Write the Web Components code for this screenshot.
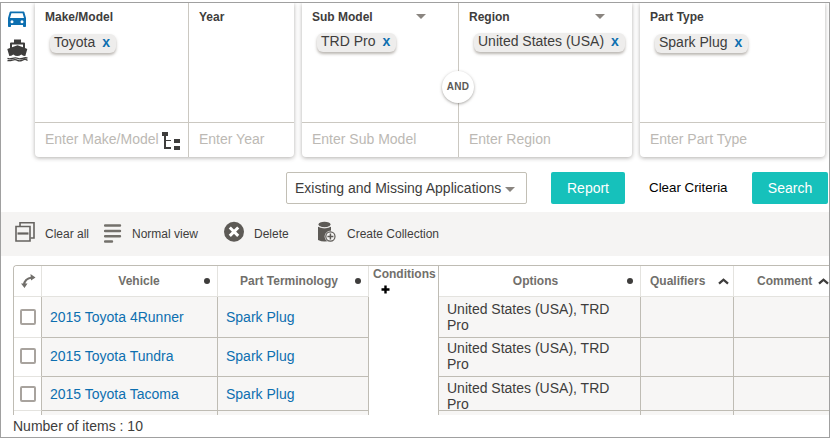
<!DOCTYPE html>
<html lang="en"><head><meta charset="utf-8"><title>Applications</title>
<style>body{margin:0;background:#fff;font-family:"Liberation Sans",Arial,sans-serif;color:#3e3d3c;overflow:hidden}</style></head><body>
<app-frame></app-frame>
<script>
const define=(name,html)=>{
  const t=document.createElement('template');
  t.innerHTML=html;
  customElements.define(name,class extends HTMLElement{
    constructor(){super();this.attachShadow({mode:'open'}).append(t.content.cloneNode(true));}
  });
};
define('filter-tag',`<style>
:host{display:flex;width:max-content;box-sizing:border-box;height:19px;margin:var(--tag-top,10px) 0 0 5px;padding:0 6px 0 4px;border-radius:6px;background:#eeedec;box-shadow:0 2px 3px rgba(90,80,70,.42);font-size:14px;line-height:17px;gap:7px;white-space:nowrap}
b{color:#0d6fb0}</style><slot></slot><b>x</b>`);
define('filter-field',`<style>
:host{display:flex;flex-direction:column;box-sizing:border-box;height:154px;border-right:var(--edge,0) solid #cbc8c1}
header{display:flex;justify-content:space-between;height:15px;padding:6px 32px 0 10px;font-weight:700;font-size:12px;line-height:16px}
.in{height:34px;margin-top:auto;border-top:1px solid #cbc8c1;padding-left:10px;font-size:14px;line-height:32px;color:#bcb9b4;white-space:nowrap}
.tags{padding-left:10px}
</style><header><slot name="title"></slot><slot name="arrow"></slot></header><div class="tags"><slot></slot></div><div class="in"><slot name="hint"></slot></div>`);
define('drop-arrow',`<style>:host{display:block;width:0;height:0;border:5px solid transparent;border-top-color:#8a8580;border-bottom:0}</style>`);
define('filter-card',`<style>:host{display:grid;box-sizing:border-box;height:154px;background:#fff;border-radius:0 0 4px 4px;box-shadow:0 1px 4px rgba(80,75,70,.45)}</style><slot></slot>`);
define('and-badge',`<style>:host{position:absolute;left:441px;top:68px;width:32px;height:32px;border-radius:50%;background:#fff;box-shadow:0 1px 3px rgba(80,75,70,.5);font:700 10px/32px "Liberation Sans",sans-serif;letter-spacing:.3px;text-align:center;color:#5b5956}</style><slot></slot>`);
define('vehicle-nav',`<style>:host{display:flex;flex-direction:column;align-items:flex-start;padding:7px 0 0 6px;gap:11px;width:28px;box-sizing:border-box}svg{display:block}</style>
<svg width="20" height="18" viewBox="0 0 20 18"><path fill="#0d6fb0" fill-rule="evenodd" d="M3.4 1.500h13.2l.7.5L19 8v8.2q0 .8-.8.8h-1.400q-.8 0-.8-.8V15H4v1.200q0 .8-.8.8H1.800Q1 17 1 16.200V8l1.700-6zM4.400 3.300 3 8h14l-1.400-4.700zM5 10.200a1.500 1.500 0 1 0 0 3 1.500 1.500 0 0 0 0-3zm10 0a1.500 1.500 0 1 0 0 3 1.500 1.500 0 0 0 0-3z"/></svg>
<svg width="21" height="23" viewBox="0 0 21 23"><path fill="#3e3d3c" fill-rule="evenodd" d="M7 .500h7v3h3q1 0 1 1v4.500l2.300 1-2 7q-2 0-4-1.500-4 3-8 0-2 1.500-4 1.500l-2-7L3 9V4.500q0-1 1-1h3zM5 5.500v2.800L10.500 6.300 16 8.300V5.500z"/><path d="M.5 19.300q1.800 1 5 0t5 0 5 0 5-.2M.5 21.500q2 .5 5-.4t5 .3 5-.3 5 .4" fill="none" stroke="#3e3d3c" stroke-width="1.300"/></svg>`);
define('tree-icon',`<style>:host{position:absolute;left:161px;top:129px}svg{display:block}</style><svg width="19" height="20" viewBox="0 0 19 20" shape-rendering="crispEdges"><path fill="#fff" d="M-1 0h20v20H-1z"/><path fill="#3e3d3c" d="M0 0h6v4H0zM12 7h6v4h-6zM12 14h6v4h-6zM2 4h2v4h-2zM2 8h7v1H4v6h5v2H2z"/></svg>`);
define('filter-bar',`<style>
:host{display:flex;height:154px;position:relative}
vehicle-nav{margin-right:6px}
.a{width:259px;grid-template-columns:154px 105px;margin-right:8px}
.b{width:330px;grid-template-columns:157px 173px;margin-right:8px}
.c{width:185px;grid-template-columns:185px}
.e{--edge:1px}.b{--tag-top:9px}
drop-arrow{margin-top:5px}
</style>
<vehicle-nav></vehicle-nav>
<filter-card class="a"><filter-field class="e"><span slot="title">Make/Model</span><filter-tag>Toyota</filter-tag><span slot="hint">Enter Make/Model</span></filter-field>
<filter-field><span slot="title">Year</span><span slot="hint">Enter Year</span></filter-field></filter-card>
<filter-card class="b"><filter-field class="e"><span slot="title">Sub Model</span><drop-arrow slot="arrow"></drop-arrow><filter-tag>TRD Pro</filter-tag><span slot="hint">Enter Sub Model</span></filter-field>
<filter-field><span slot="title">Region</span><drop-arrow slot="arrow" style="margin-right:-5px"></drop-arrow><filter-tag style="margin-left:5px">United States (USA)</filter-tag><span slot="hint">Enter Region</span></filter-field></filter-card>
<filter-card class="c"><filter-field><span slot="title">Part Type</span><filter-tag>Spark Plug</filter-tag><span slot="hint">Enter Part Type</span></filter-field></filter-card>
<tree-icon></tree-icon><and-badge>AND</and-badge>`);
define('action-row',`<style>
:host{display:flex;justify-content:flex-end;height:32px;margin:15px 0 8px;font-size:14px;line-height:32px;padding-right:1px;white-space:nowrap}
.sel{display:flex;box-sizing:border-box;width:241px;height:32px;border:1px solid #c2bfb5;border-radius:2px;padding-left:8px;line-height:30px;margin-right:24px}
drop-arrow{margin:14px 0 0 4px}
button{font:inherit;border:0;padding:0;color:#fff;background:#16c1bb;border-radius:2px;width:74px;height:32px}
.l{font-size:13.333px;color:#000;width:78px;margin:0 25px 0 24px}
.s{width:76px}
</style><div class="sel"><span>Existing and Missing Applications</span><drop-arrow></drop-arrow></div><button>Report</button><span class="l">Clear Criteria</span><button class="s">Search</button>`);
define('tool-item',`<style>:host{display:flex;align-items:flex-start;height:44px;font-size:12px;line-height:44px;white-space:nowrap;color:#3e3d3c}::slotted(svg){display:block;flex:none}</style><slot name="icon"></slot><slot></slot>`);
define('tool-bar',`<style>:host{display:grid;grid-template-columns:89px 120px 93px 1fr;height:44px;background:#f5f4f3;padding-left:14px}svg{margin-top:9px}</style>
<tool-item><svg slot="icon" width="30" height="24" viewBox="0 0 30 24" fill="none" stroke="#666360"><path d="M5 5V1.700h14V17h-3.500" stroke-width="1.600"/><path d="M1 5.500h14V20H1z" fill="#f5f4f3" stroke-width="1.600"/><path d="M2.500 12.500h11" stroke-width="2.200"/></svg>Clear all</tool-item>
<tool-item><svg slot="icon" width="28" height="24" viewBox="0 0 28 24"><path d="M1 4.500h15M1 10h15M1 15.300h15M1 20.500h7" stroke="#73706b" stroke-width="2.400" stroke-linecap="round"/></svg>Normal view</tool-item>
<tool-item><svg slot="icon" width="30" height="24" viewBox="0 0 30 24"><circle cx="10" cy="10.700" r="10" fill="#5d5a56"/><path d="m5.800 6.500 8.400 8.400m0-8.400-8.400 8.400" stroke="#fff" stroke-width="3"/></svg>Delete</tool-item>
<tool-item><svg slot="icon" width="30" height="24" viewBox="0 0 30 24"><path fill="#5d5a56" d="M1 5q6.500 3.400 13 0v14q-6.500 3-13 0z"/><ellipse cx="7.500" cy="3.500" rx="6" ry="2.700" fill="#5d5a56"/><path d="M1 5.200q6.500 3.400 13 0" fill="none" stroke="#f5f4f3"/><circle cx="13.400" cy="15.500" r="5.300" fill="#f5f4f3" stroke="#f5f4f3"/><circle cx="13.400" cy="15.500" r="4.600" fill="#f5f4f3" stroke="#5d5a56" stroke-width="1.200"/><path d="M13.400 12.500v6m-3-3h6" stroke="#5d5a56" stroke-width="1.500"/></svg>Create Collection</tool-item>`);
define('data-grid',`<style>
:host{display:block;box-sizing:border-box;margin:9px 0 0 12px;height:150px;border-top:1px solid #bfbcb4;border-left:1px solid #bfbcb4;border-top-left-radius:4px;overflow:hidden;font-size:14px;line-height:16px}
.g{display:grid;grid-template-columns:28px 176px 151px 70px 202px 93px 95px;grid-template-rows:31px 41px 39px 34px 10px}
.g>div{box-sizing:border-box;border-right:1px solid #bfbcb4;border-bottom:1px solid #bfbcb4;background:#f7f6f5;overflow:hidden;display:flex;align-items:center;padding-left:8px;white-space:nowrap}
.g>.h{background:#fff;border-color:#e4e3df;font-weight:700;font-size:12px;color:#716f6b;padding:0;display:grid;grid-template-columns:1fr auto}
.h span{text-align:center}
.g>.c{background:#fff;border-bottom-color:#e4e3df;padding:0;justify-content:center}
.g>.cond{grid-row:1/6;grid-column:4;background:#fff;border-bottom:0;display:block;padding:1px 0 0 4px;font-weight:700;font-size:12px;line-height:14px;color:#716f6b}
.cond svg{display:block;margin:4px 0 0 8px}
i{box-sizing:border-box;width:16px;height:16px;border:2px solid #a8a39e;border-radius:2px;background:#fff}
.dot{width:6px;height:6px;border-radius:50%;background:#3e3d3c}
.v{color:#0d6fb0}
.g>.r1{padding-bottom:2px}
.g>.o{white-space:normal;align-items:flex-start;padding-right:20px;padding-top:4px}
.g>.o.r1{padding-top:2px}
.g>.o.r2{padding-top:3px}
.g>.last{border-right:0}
</style><div class="g" id="g"></div>`);
define('status-line',`<style>:host{display:block;padding:2px 0 0 12px;font-size:14px;line-height:18px}</style><slot></slot>`);

// Header cells, then one line of cells per vehicle, in column order.
class VehicleGrid extends HTMLElement{
  constructor(){
    super();
    const grid=document.createElement('data-grid');
    this.attachShadow({mode:'open'}).append(grid);
    const dot='<b class="dot" style="margin-right:7px"></b>';
    const up='<svg width="11" height="7" viewBox="0 0 11 7" fill="none" stroke="#3e3d3c" stroke-width="2.300"><path d="M1 5.700 5.500 1.700 10 5.700"/></svg>';
    let html='<div class="h"><svg width="15" height="15" viewBox="0 0 15 15" style="margin-left:7px"><path d="M3 11Q3.500 4.500 11 3.500" fill="none" stroke="#716f6b" stroke-width="2.200"/><path fill="#716f6b" d="M9.500 0 14.500 3.500l-4.500 3zM0 9.500h6.500L3.500 14z"/></svg></div>'
    +`<div class="h"><span style="padding-left:32px">Vehicle</span>${dot}</div><div class="h"><span style="padding-left:5px">Part Terminology</span>${dot}</div>`
    +'<div class="cond">Conditions<svg width="9" height="9"><path d="M4.500.500v8m-4-4h8" stroke="#000" stroke-width="2.400"/></svg></div>'
    +`<div class="h"><span style="padding-left:5px">Options</span>${dot}</div><div class="h"><span style="text-align:left;padding-left:9px">Qualifiers</span><b style="margin-right:4px;display:flex">${up}</b></div><div class="h last"><span style="text-align:left;padding-left:23px">Comment</span><b style="display:flex">${up}</b></div>`;
    ['2015 Toyota 4Runner','2015 Toyota Tundra','2015 Toyota Tacoma',''].forEach((name,n)=>{
      html+=`<div class="c r${n}">${name?'<i></i>':''}</div><div class="v r${n}">${name}</div><div class="v r${n}">${name&&'Spark Plug'}</div><div class="o r${n}" style="grid-column:5">${name&&'United States (USA), TRD Pro'}</div><div></div><div class="last"></div>`;
    });
    grid.shadowRoot.getElementById('g').innerHTML=html;
  }
}
customElements.define('vehicle-grid',VehicleGrid);
define('app-frame',`<style>:host{display:flow-root;box-sizing:border-box;margin-top:2px;width:830px;height:436px;border:1px solid #a0a0a0;overflow:hidden;position:relative}</style>
<filter-bar></filter-bar><action-row></action-row><tool-bar></tool-bar><vehicle-grid></vehicle-grid><status-line>Number of items : 10</status-line>`);
</script></body></html>
